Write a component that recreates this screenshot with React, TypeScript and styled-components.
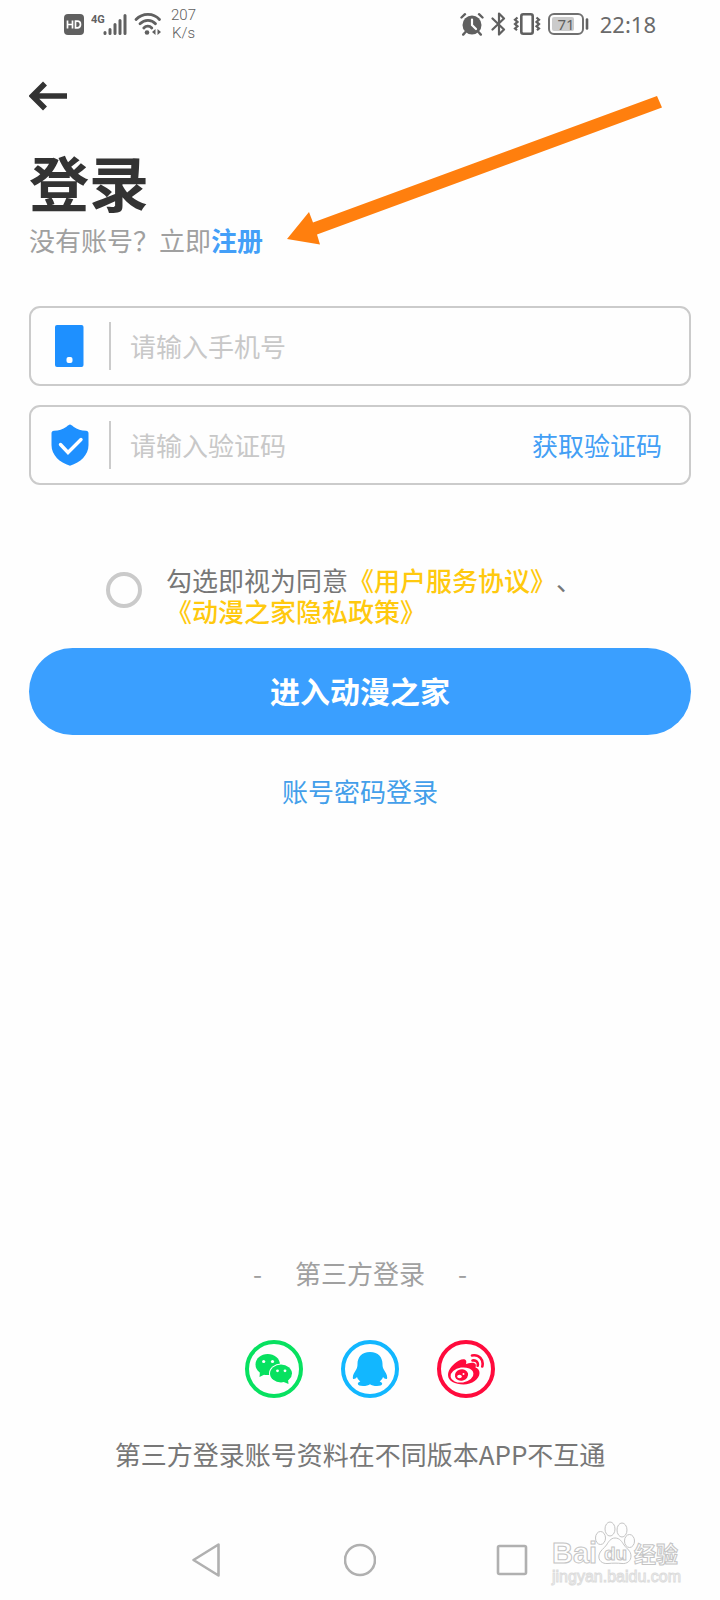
import React from "react";
import styled, { createGlobalStyle } from "styled-components";

const GlobalStyle = createGlobalStyle`
  *, *::before, *::after { box-sizing: border-box; }
  body {
    margin: 0;
    background: #fefefe;
    font-family: "Noto Sans CJK SC", sans-serif;
    font-size: 26px;
    line-height: 32px;
    color: #777;
    text-spacing-trim: space-all;
    font-kerning: none;
  }
  button, input { font: inherit; }
  button { border: 0; padding: 0; background: none; cursor: pointer; }
  svg { display: block; }
`;

const Screen = styled.div`
  display: flex;
  flex-direction: column;
  min-height: 100vh;
`;

const StatusBar = styled.header`
  display: flex;
  justify-content: space-between;
  align-items: center;
  height: 48px;
  padding: 0 64px;
  color: #606060;
`;

const StatusGroup = styled.div`
  display: flex;
  align-items: center;
  gap: 7px;
`;

const Speed = styled.div`
  margin-left: 2px;
  font: 300 15px/18px Roboto, sans-serif;
  text-align: center;
`;

const Clock = styled.time`
  margin-left: 4px;
  font: 400 22px/24px "Noto Sans", sans-serif;
  color: #6a6a6a;
`;

const Main = styled.main`
  flex: 1;
  display: flex;
  flex-direction: column;
  padding: 33px 29px 0;
`;

const Intro = styled.section`
  position: relative;
`;

const BackButton = styled.button`
  display: block;
  height: 30px;
`;

const Title = styled.h1`
  margin: 38px 0 11px;
  font-size: 60px;
  line-height: 64px;
  font-weight: 700;
  color: #333;
`;

const Hint = styled.p`
  margin: 0;
  color: #a0a0a0;
`;

const Link = styled.a<{ $tone: string; $weight?: number }>`
  color: ${(p) => p.$tone};
  font-weight: ${(p) => p.$weight ?? 400};
  text-decoration: none;
`;

const Pointer = styled.svg`
  position: absolute;
  top: 12px;
  left: 256px;
  pointer-events: none;
`;

const Form = styled.form`
  display: flex;
  flex-direction: column;
  margin-top: 50px;
`;

const Fields = styled.div`
  display: flex;
  flex-direction: column;
  gap: 19px;
`;

const Field = styled.div`
  display: flex;
  align-items: center;
  height: 80px;
  padding-right: 27px;
  border: 2px solid #cbcbcb;
  border-radius: 11px;
`;

const FieldLabel = styled.label`
  display: flex;
  justify-content: center;
  align-items: center;
  width: 80px;
  height: 48px;
  border-right: 2px solid #cbcbcb;
`;

const FieldInput = styled.input`
  flex: 1;
  min-width: 0;
  padding: 0 0 0 19px;
  border: 0;
  outline: 0;
  background: transparent;
  color: #333;
  &::placeholder { color: #c8c8c8; opacity: 1; }
`;

const CodeButton = styled.button`
  color: #439ff5;
`;

const Agreement = styled.div`
  display: flex;
  align-items: flex-start;
  gap: 24px;
  margin: 79px 77px 22px;
  line-height: 31px;
`;

const Round = styled.input`
  appearance: none;
  flex: none;
  width: 36px;
  height: 36px;
  margin: 8px 0 0;
  border: 4px solid #cacaca;
  border-radius: 50%;
  &:checked { background: #3a9fff; }
`;

const Submit = styled.button`
  height: 87px;
  padding-bottom: 3px;
  border-radius: 44px;
  background: #3a9fff;
  color: #fff;
  font-size: 30px;
  font-weight: 700;
`;

const PasswordLogin = styled.div`
  margin-top: 40px;
  text-align: center;
`;

const ThirdParty = styled.section`
  display: flex;
  flex-direction: column;
  align-items: center;
  margin-top: auto;
  padding-top: 48px;
`;

const ThirdTitle = styled.h2`
  display: flex;
  gap: 33px;
  margin: 0 0 51px;
  font-size: 26px;
  font-weight: 400;
  color: #a0a0a0;
`;

const Socials = styled.div`
  display: flex;
  gap: 38px;
  padding-left: 20px;
`;

const Social = styled.button<{ $tone: string }>`
  display: flex;
  align-items: center;
  justify-content: center;
  width: 58px;
  height: 58px;
  border: 4px solid ${(p) => p.$tone};
  border-radius: 50%;
  color: ${(p) => p.$tone};
`;

const Note = styled.p`
  margin: 40px 0 56px;
  text-align: center;
`;

const NavBar = styled.nav`
  position: relative;
  display: flex;
  justify-content: center;
  align-items: center;
  gap: 120px;
  height: 74px;
  padding-bottom: 6px;
`;

const Watermark = styled.svg`
  position: absolute;
  right: 36px;
  bottom: 10px;
`;

const HdIcon = () => (
  <svg width="20" height="21" viewBox="0 0 20 21" aria-hidden="true">
    <rect width="20" height="21" rx="4" fill="#606060" />
    <path d="M3.500 6.500v8M8.500 6.500v8M3.500 10.500h5M11.500 7.200v6.600h1.800c2 0 3.200-1.200 3.200-3.300s-1.200-3.300-3.200-3.300z" fill="none" stroke="#fff" strokeWidth="1.700" />
  </svg>
);

const SignalIcon = () => (
  <svg width="36" height="24" viewBox="0 0 36 24" aria-hidden="true">
    <text x="0" y="11" fontFamily="Roboto, sans-serif" fontWeight="700" fontSize="11" fill="#606060">4G</text>
    <path d="M14 20.500v1M19 17.500v4M24 12.500v9M29 8.500v13M34 3.500v18" stroke="#606060" strokeWidth="3" strokeLinecap="round" />
  </svg>
);

const WifiIcon = () => (
  <svg width="28" height="24" viewBox="0 0 28 24" aria-hidden="true">
    <g fill="none" stroke="#606060" strokeWidth="2.800" strokeLinecap="round">
      <path d="M2 7.500C8.500.700 19.500.700 25.500 7.500" />
      <path d="M6 11.800c4.500-4.500 11.500-4.500 15.500 0" />
      <path d="M9.800 16c2.200-2.400 5.800-2.400 8 0" />
    </g>
    <circle cx="13" cy="20.500" r="2.300" fill="#606060" />
    <path d="M21.500 17v6l-3.500-3zM23.500 17v6l3.500-3z" fill="#606060" />
  </svg>
);

const AlarmIcon = () => (
  <svg width="24" height="24" viewBox="0 0 24 24" aria-hidden="true">
    <circle cx="12" cy="13" r="9.500" fill="#606060" />
    <path d="M5.500 20l-2.300 2.600M18.500 20l2.300 2.600M1.500 5.500L5 2.200M22.500 5.500L19 2.200" stroke="#606060" strokeWidth="2.400" strokeLinecap="round" />
    <path d="M12 7.500V13l4 4" fill="none" stroke="#fff" strokeWidth="2.200" strokeLinecap="round" />
  </svg>
);

const BluetoothIcon = () => (
  <svg width="15" height="24" viewBox="0 0 15 24" aria-hidden="true">
    <path d="M1.500 6.500L13 17.500l-5 5V1.500l5 5L1.500 17.500" fill="none" stroke="#606060" strokeWidth="2.200" strokeLinejoin="round" strokeLinecap="round" />
  </svg>
);

const VibrateIcon = () => (
  <svg width="28" height="24" viewBox="0 0 28 24" aria-hidden="true">
    <g fill="none" stroke="#606060">
      <rect x="8.300" y="2.300" width="11.400" height="19.400" rx="2" strokeWidth="2.600" />
      <path d="M4.500 5.500L2 7.700l2.500 2.200L2 12.100l2.500 2.200L2 16.500l2 1.800M23.500 5.500L26 7.700l-2.500 2.200 2.500 2.200-2.500 2.200 2.500 2.200-2 1.800" strokeWidth="2.200" />
    </g>
  </svg>
);

const BatteryIcon = () => (
  <svg width="41" height="22" viewBox="0 0 41 22" role="img" aria-label="71%">
    <rect x="1" y="1" width="34" height="20" rx="5" fill="none" stroke="#707070" strokeWidth="2" />
    <rect x="4" y="4" width="22" height="14" rx="2" fill="#cbcbcb" />
    <text x="18" y="17" textAnchor="middle" fontFamily="Noto Sans, sans-serif" fontSize="15" fill="#606060">71</text>
    <path d="M39 6.500v9" stroke="#606060" strokeWidth="2.600" strokeLinecap="round" />
  </svg>
);

const BackIcon = () => (
  <svg width="38" height="30" viewBox="0 0 38 30" aria-hidden="true">
    <path d="M16 2.500L3.500 15 16 27.500M4 15h34" fill="none" stroke="#333" strokeWidth="5.600" />
  </svg>
);

const PhoneIcon = () => (
  <svg width="30" height="42" viewBox="0 0 30 42" aria-hidden="true">
    <rect width="28.500" height="42" rx="2" fill="#1e90ff" />
    <rect x="11.500" y="32" width="6" height="6" rx="2" fill="#fff" />
  </svg>
);

const ShieldIcon = () => (
  <svg width="38" height="42" viewBox="0 0 38 42" aria-hidden="true">
    <path d="M19 .5c1 0 2 1 3.500 2.200C26.500 5.500 30 6.600 35 6.800c1.600.1 2.500 1 2.500 2.600V21c0 10-8 17.500-18.500 20.700C8.500 38.500.5 31 .5 21V9.400C.5 7.800 1.400 6.900 3 6.800 8 6.600 11.500 5.500 15.500 2.700 17 1.500 18 .5 19 .5z" fill="#1e90ff" />
    <path d="M9.500 20.500l7.500 8L30 15.500" fill="none" stroke="#fff" strokeWidth="3.400" strokeLinecap="round" />
  </svg>
);

const WechatIcon = () => (
  <svg width="38" height="38" viewBox="0 0 38 38" aria-hidden="true">
    <ellipse cx="12.700" cy="14.500" rx="12.200" ry="10.500" fill="currentColor" />
    <path d="M5 21l-.5 6 6-3z" fill="currentColor" />
    <ellipse cx="26" cy="23.500" rx="12" ry="10" fill="#fefefe" />
    <ellipse cx="26" cy="23.500" rx="11" ry="9" fill="currentColor" />
    <path d="M33 29l.5 5-6-2.500z" fill="currentColor" />
    <g fill="#fefefe">
      <circle cx="8.700" cy="11.500" r="1.600" />
      <circle cx="17.500" cy="11.500" r="1.600" />
      <circle cx="22.500" cy="20.800" r="1.400" />
      <circle cx="30" cy="20.800" r="1.400" />
    </g>
  </svg>
);

const QqIcon = () => (
  <svg width="36" height="36" viewBox="0 0 36 36" aria-hidden="true">
    <path d="M18 1C9.500 1 5.500 6.500 5.500 13c0 2-.2 3.200-1 5C2.800 21 .8 23.500.8 26.500c0 1 .4 1.500 1 1.500 1.200 0 2.300-.9 3.200-2 .7 2 1.800 3.400 3.300 4.500-1.700.6-2.500 1.400-2.500 2.300 0 1.500 2.300 2.200 5.200 2.200 3 0 5.700-.6 7-1.800 1.300 1.200 4 1.800 7 1.800 2.900 0 5.200-.7 5.200-2.200 0-.9-.8-1.700-2.500-2.300 1.500-1.100 2.600-2.500 3.300-4.500.9 1.100 2 2 3.200 2 .6 0 1-.5 1-1.500 0-3-2-5.500-3.700-8.500-.8-1.800-1-3-1-5C30.500 6.500 26.500 1 18 1z" fill="currentColor" />
  </svg>
);

const WeiboIcon = () => (
  <svg width="38" height="38" viewBox="0 0 38 38" aria-hidden="true">
    <path d="M1 25c0-5.500 5.500-11.500 11-14.500 3-1.600 6-1.800 7 0 .5 1 .3 2.300 0 3.500 2-1 8-2.500 9.500 0 .7 1.300.3 2.500 0 3.600 2.500.7 4 2.600 4 5.400 0 6-7.500 11.500-16 11.500S1 31 1 25z" fill="currentColor" />
    <ellipse cx="15" cy="25" rx="11.500" ry="7.500" transform="rotate(-8 15 25)" fill="#fefefe" />
    <ellipse cx="14.500" cy="25" rx="6.700" ry="5.700" transform="rotate(-15 14.500 25)" fill="currentColor" />
    <ellipse cx="12.500" cy="26.500" rx="2.300" ry="1.800" fill="#fefefe" />
    <circle cx="16.500" cy="24" r="1" fill="#fefefe" />
    <path d="M25 5.500c7-1.200 12 4 10.300 11M25.500 10.500c3.800-.7 6 2 5.200 5.300" fill="none" stroke="currentColor" strokeWidth="2.600" strokeLinecap="round" />
  </svg>
);

export default function App() {
  return (
    <>
      <GlobalStyle />
      <Screen lang="zh-CN">
        <StatusBar>
          <StatusGroup>
            <HdIcon />
            <SignalIcon />
            <WifiIcon />
            <Speed>207<br />K/s</Speed>
          </StatusGroup>
          <StatusGroup>
            <AlarmIcon />
            <BluetoothIcon />
            <VibrateIcon />
            <BatteryIcon />
            <Clock>22:18</Clock>
          </StatusGroup>
        </StatusBar>

        <Main>
          <Intro>
            <BackButton type="button" aria-label="返回"><BackIcon /></BackButton>
            <Title>登录</Title>
            <Hint>没有账号？立即<Link href="#register" $tone="#439ff8" $weight={700}>注册</Link></Hint>
            <Pointer width="380" height="156" viewBox="0 0 380 156" aria-hidden="true">
              <path d="M2 146L24 119L28 129.500L372 3L377 14.500L32 141.500L35 151.500Z" fill="#ff7f0e" />
            </Pointer>
          </Intro>

          <Form onSubmit={(e) => e.preventDefault()}>
            <Fields>
              <Field>
                <FieldLabel htmlFor="phone" aria-label="手机号"><PhoneIcon /></FieldLabel>
                <FieldInput id="phone" type="tel" placeholder="请输入手机号" />
              </Field>
              <Field>
                <FieldLabel htmlFor="code" aria-label="验证码"><ShieldIcon /></FieldLabel>
                <FieldInput id="code" type="text" placeholder="请输入验证码" />
                <CodeButton type="button">获取验证码</CodeButton>
              </Field>
            </Fields>
            <Agreement>
              <Round id="agree" type="checkbox" />
              <label htmlFor="agree">
                勾选即视为同意<Link href="#terms" $tone="#ffc90e" $weight={500}>《用户服务协议》</Link>、<br />
                <Link href="#privacy" $tone="#ffc90e" $weight={500}>《动漫之家隐私政策》</Link>
              </label>
            </Agreement>
            <Submit type="submit">进入动漫之家</Submit>
          </Form>
          <PasswordLogin>
            <Link href="#password" $tone="#439fea">账号密码登录</Link>
          </PasswordLogin>

          <ThirdParty>
            <ThirdTitle><span>-</span><span>第三方登录</span><span>-</span></ThirdTitle>
            <Socials>
              <Social type="button" $tone="#07e160" aria-label="微信"><WechatIcon /></Social>
              <Social type="button" $tone="#12b7ff" aria-label="QQ"><QqIcon /></Social>
              <Social type="button" $tone="#ff0a3c" aria-label="微博"><WeiboIcon /></Social>
            </Socials>
            <Note>第三方登录账号资料在不同版本APP不互通</Note>
          </ThirdParty>
        </Main>

        <NavBar>
          <svg width="32" height="36" viewBox="0 0 32 36" aria-hidden="true">
            <path d="M26.500 2.500v31L1.500 18z" fill="none" stroke="#b0b0b0" strokeWidth="2.600" strokeLinejoin="round" />
          </svg>
          <svg width="32" height="36" viewBox="0 0 32 36" aria-hidden="true">
            <circle cx="16" cy="18" r="15" fill="none" stroke="#b0b0b0" strokeWidth="2.600" />
          </svg>
          <svg width="32" height="36" viewBox="0 0 32 36" aria-hidden="true">
            <rect x="2" y="4" width="28" height="28" rx="1.500" fill="none" stroke="#b0b0b0" strokeWidth="2.600" />
          </svg>
          <Watermark width="134" height="70" viewBox="0 0 134 70">
            <g fill="#fefefe" stroke="#c4c4c4" strokeWidth="1" fontFamily="Liberation Sans, Noto Sans CJK SC, sans-serif">
              <text x="2" y="43" fontSize="29" fontWeight="700">Bai</text>
              <ellipse cx="50.500" cy="18" rx="5" ry="6.500" />
              <ellipse cx="60" cy="9" rx="5" ry="7" />
              <ellipse cx="72" cy="10" rx="5" ry="7" />
              <ellipse cx="79.500" cy="21" rx="5" ry="6.500" />
              <path d="M65 18c5 0 7 4 9 7 3 4 7 6 7 11s-4 8-9 7.500c-5-.5-9-.5-14 0-6 .5-10-3-9-8.500 1-4.500 5-6.500 7.500-10 2-3 4-7 8.500-7z" />
              <text x="54" y="40" fontSize="19" fontWeight="700">du</text>
              <text x="84" y="42" fontSize="22" fontWeight="700">经验</text>
              <text x="2" y="62" fontSize="16" stroke="#dcdcdc">jingyan.baidu.com</text>
            </g>
          </Watermark>
        </NavBar>
      </Screen>
    </>
  );
}
